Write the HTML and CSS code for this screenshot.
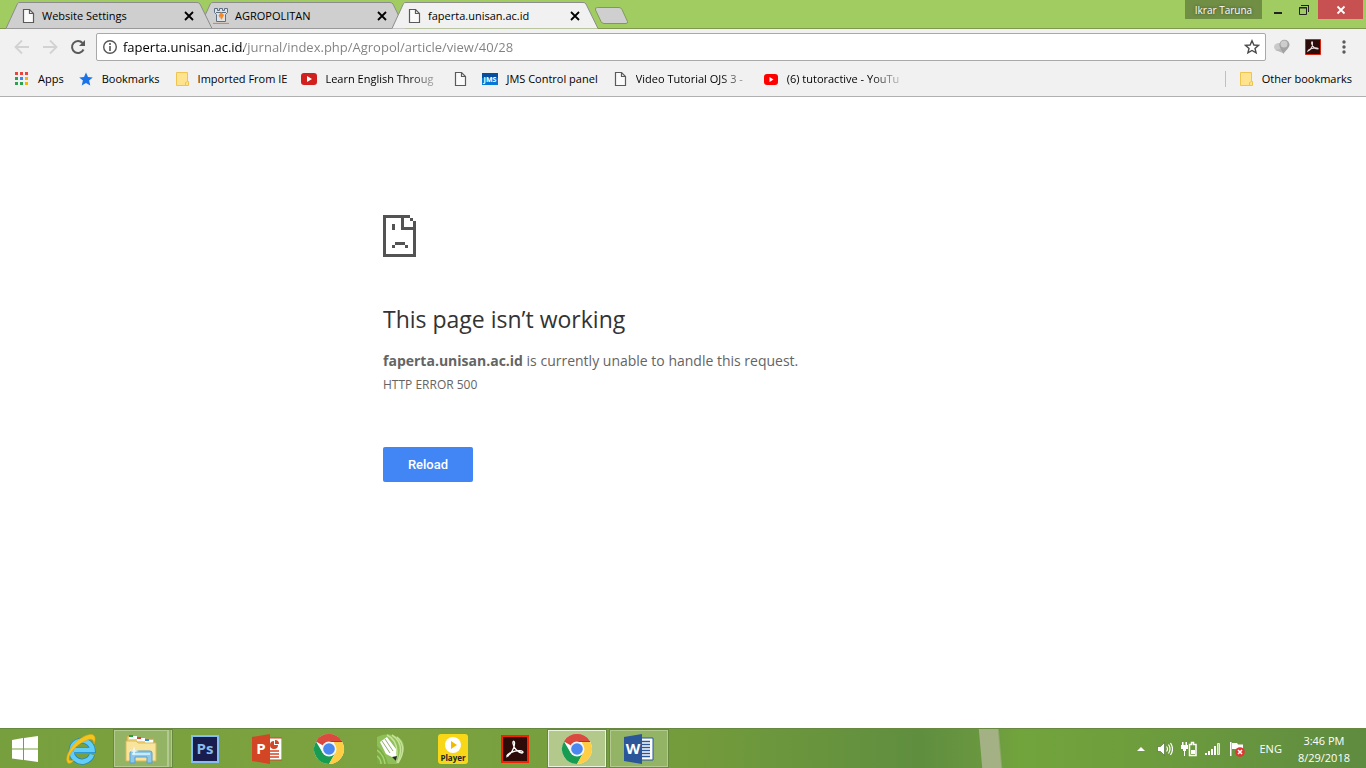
FILE: index.html
```
<!DOCTYPE html>
<html lang="en">
<head>
    <meta charset="UTF-8">
    <meta name="viewport" content="width=device-width, initial-scale=1.0">
    <title>faperta.unisan.ac.id</title>
    <link rel="stylesheet" href="styles.css">
</head>
<body>
    <!-- shared icons -->
    <svg class="sprite" aria-hidden="true">
        <symbol id="page" viewBox="0 0 16 16">
            <path d="M3.5 1.500h6l4 4v9h-10z" fill="#fafafa" stroke="#5a5a5a" stroke-width="1.2"/>
            <path d="M9.500 1.500v4h4" fill="none" stroke="#5a5a5a" stroke-width="1.2"/>
        </symbol>
        <symbol id="folder" viewBox="0 0 16 16">
            <path d="M2.500 1.500h11v9h1v4h-12z" fill="#ffe38f" stroke="#efc54f"/>
            <path d="M11.500 14.500v-3l2-1" fill="none" stroke="#efc54f"/>
        </symbol>
        <symbol id="cross" viewBox="0 0 16 16">
            <path d="M4 4l8 8M12 4l-8 8" fill="none" stroke="currentColor" stroke-width="1.8"/>
        </symbol>
        <symbol id="tabshape" viewBox="0 0 206 27">
            <path d="M0 26.500L11.500 1.500Q12 .5 14 .5H191Q193 .5 194 2L206 26.500" stroke="#8c8c8c"/>
        </symbol>
        <symbol id="chrome" viewBox="0 0 32 32">
            <circle cx="16" cy="16" r="15" fill="#fff"/>
            <path d="M16 16L3 8.500A15 15 0 0 1 29 8.500L16 9z" fill="#d8453b"/>
            <path d="M3 8.500A15 15 0 0 1 29 8.500H16z" fill="#db4a3f"/>
            <path d="M3 8.500A15 15 0 0 0 16 31L22.500 19.500L16 22.500L9.500 19.500z" fill="#179c52"/>
            <path d="M29 8.500A15 15 0 0 1 16 31L22.500 19.500L21 9z" fill="#ffce44"/>
            <path d="M16 8.500H29" stroke="#b5342c"/>
            <circle cx="16" cy="16" r="7.500" fill="#f4f4f4"/>
            <circle cx="16" cy="16" r="5.800" fill="#4a87ee"/>
        </symbol>
    </svg>

    <header class="browser">
        <div class="titlebar">
            <div class="tabs">
                <div class="tab first">
                    <svg class="shape"><use href="#tabshape"/></svg>
                    <svg class="icon"><use href="#page"/></svg>
                    <span class="tab-title">Website Settings</span>
                    <button type="button" class="close-tab" aria-label="Close tab"><svg class="icon"><use href="#cross"/></svg></button>
                </div>
                <div class="tab">
                    <svg class="shape"><use href="#tabshape"/></svg>
                    <svg class="icon" viewBox="0 0 16 16">
                        <path d="M1.500.5h3v2h2v-2h3v2h2v-2h3v4l-2 2v7h-9v-7l-2-2z" fill="#dfe2e6" stroke="#5d6f84"/>
                        <path d="M3 4.500h10" stroke="#5d6f84"/>
                        <path d="M8 4L5.500 7.500 7.500 11V8l1 4 2.500-5z" fill="#f28b25"/>
                        <path d="M0 15.500h16" stroke="#e8862b" stroke-width="1.200"/>
                    </svg>
                    <span class="tab-title">AGROPOLITAN</span>
                    <button type="button" class="close-tab" aria-label="Close tab"><svg class="icon"><use href="#cross"/></svg></button>
                </div>
                <div class="tab active">
                    <svg class="shape"><use href="#tabshape"/></svg>
                    <svg class="icon"><use href="#page"/></svg>
                    <span class="tab-title">faperta.unisan.ac.id</span>
                    <button type="button" class="close-tab" aria-label="Close tab"><svg class="icon"><use href="#cross"/></svg></button>
                </div>
                <button type="button" class="new-tab" aria-label="New tab">
                    <svg width="35" height="18" viewBox="0 0 35 18"><path d="M3.500.5H25q2 0 3 2l5.500 12q.5 2-1.500 2H10q-2 0-3-2L1.500 3q-1-2.500 2-2.500z" fill="#cfcfcf" stroke="#809a56"/></svg>
                </button>
            </div>
            <div class="window-controls">
                <button type="button" class="profile">Ikrar Taruna</button>
                <button type="button" class="control" aria-label="Minimize"><svg width="12" height="12"><path d="M2 9h8" stroke="#222" stroke-width="2"/></svg></button>
                <button type="button" class="control" aria-label="Restore"><svg width="12" height="12"><path d="M1.500 3.500h7v7h-7zM4 1.500h6.500V8" fill="none" stroke="#222"/><path d="M1 4h8M3 1.500h8" stroke="#222"/></svg></button>
                <button type="button" class="control close" aria-label="Close"><svg width="12" height="12"><path d="M2.500 2.500l7 7M9.500 2.500l-7 7" stroke="#fff" stroke-width="1.800"/></svg></button>
            </div>
        </div>

        <div class="toolbar">
            <button type="button" class="tool" aria-label="Back"><svg width="16" height="16"><path d="M15 8H2M8 1.500L1.500 8L8 14.500" fill="none" stroke="#d2d2d2" stroke-width="1.800"/></svg></button>
            <button type="button" class="tool" aria-label="Forward"><svg width="16" height="16"><path d="M1 8h13M8 1.500L14.500 8L8 14.500" fill="none" stroke="#d2d2d2" stroke-width="1.800"/></svg></button>
            <button type="button" class="tool" aria-label="Reload this page"><svg width="16" height="16"><path d="M13.500 10.500A6 6 0 1 1 12.500 4" fill="none" stroke="#5a5a5a" stroke-width="2"/><path d="M15 1v6H9z" fill="#5a5a5a"/></svg></button>
            <div class="omnibox">
                <svg class="icon" viewBox="0 0 16 16"><circle cx="8" cy="8" r="6.300" fill="none" stroke="#555" stroke-width="1.400"/><path d="M8 7v5M8 4v2" stroke="#555" stroke-width="1.600"/></svg>
                <input type="text" class="url" aria-label="Address" value="faperta.unisan.ac.id/jurnal/index.php/Agropol/article/view/40/28">
                <button type="button" class="plain" aria-label="Bookmark this page"><svg class="icon" viewBox="0 0 16 16"><path d="M8 1.800l1.900 4.200 4.600.4-3.500 3 1.100 4.500L8 11.500l-4.100 2.400L5 9.400l-3.500-3L6.100 6z" fill="none" stroke="#4a4a4a" stroke-width="1.400"/></svg></button>
            </div>
            <div class="extensions">
                <button type="button" class="tool" aria-label="Extension"><svg width="16" height="16"><ellipse cx="5" cy="8" rx="5" ry="4" fill="#c9c9c9"/><path d="M1 11l8 3 2-5z" fill="#b9b9b9"/><path d="M9.500 15C8 12 5.500 9 5.300 5.800a5 5 0 0 1 10.200 0C15.500 9 11 12 9.500 15z" fill="#a3a3a3"/><circle cx="10" cy="5" r="3.500" fill="#cdcdcd"/></svg></button>
                <button type="button" class="tool" aria-label="Adobe Acrobat"><svg width="16" height="16"><path d="M.5.500h15v15H.5z" fill="#2b0d0a" stroke="#d8230f"/><path d="M3 12C6 10.500 8 8 7.500 3.500 7 2 6 3.500 7 5.500c1 2.500 3.500 4.500 6 4.500.8-1-2-1.600-5-.8-2.500.5-4.500 1.500-5 2.800z" fill="none" stroke="#e9dcdc" stroke-width="1.100"/></svg></button>
                <button type="button" class="tool" aria-label="Menu"><svg width="16" height="16"><circle cx="8" cy="3" r="1.700" fill="#5a5a5a"/><circle cx="8" cy="8" r="1.700" fill="#5a5a5a"/><circle cx="8" cy="13" r="1.700" fill="#5a5a5a"/></svg></button>
            </div>
        </div>

        <nav class="bookmarks">
            <a href="#" class="bookmark"><svg class="icon" viewBox="0 0 16 16"><path d="M1 1h3v3H1zM6 1h3v3H6zM11 1h3v3h-3z" fill="#e8453c"/><path d="M1 6h3v3H1zM1 11h3v3H1z" fill="#2ba24c"/><path d="M6 6h3v3H6z" fill="#4286f5"/><path d="M11 6h3v3h-3zM11 11h3v3h-3z" fill="#f5b400"/><path d="M6 11h3v3H6z" fill="#2ba24c"/></svg><span>Apps</span></a>
            <a href="#" class="bookmark"><svg class="icon" viewBox="0 0 16 16"><path d="M8 1.500l2 4.500 4.800.4-3.700 3.200 1.200 4.800L8 12l-4.300 2.400 1.200-4.800L1.200 6.400 6 6z" fill="#1a73e8"/></svg><span>Bookmarks</span></a>
            <a href="#" class="bookmark"><svg class="icon"><use href="#folder"/></svg><span>Imported From IE</span></a>
            <a href="#" class="bookmark"><svg class="icon" viewBox="0 0 16 16"><rect y="2" width="16" height="12" rx="3" fill="#d0211f"/><path d="M6 5l5 3-5 3z" fill="#fff"/></svg><span class="fade">Learn English Throug</span></a>
            <a href="#" class="bookmark" aria-label="Untitled bookmark"><svg class="icon"><use href="#page"/></svg></a>
            <a href="#" class="bookmark"><svg class="icon" viewBox="0 0 16 16"><path d="M0 2h16v12H0z" fill="#0878d6"/><path d="M0 2h16v5H0z" fill="#064f9c"/><text x="8" y="11" class="jms">JMS</text></svg><span>JMS Control panel</span></a>
            <a href="#" class="bookmark"><svg class="icon"><use href="#page"/></svg><span class="fade">Video Tutorial OJS 3 -</span></a>
            <a href="#" class="bookmark"><svg class="icon" viewBox="0 0 16 16"><rect x="1" y="3" width="14" height="11" rx="3" fill="#f00"/><path d="M6.500 6l4 2.500-4 2.500z" fill="#fff"/></svg><span class="fade">(6) tutoractive - YouTu</span></a>
            <a href="#" class="bookmark other"><svg class="icon"><use href="#folder"/></svg><span>Other bookmarks</span></a>
        </nav>
    </header>

    <main class="content">
        <div class="error">
            <svg class="sad" width="33" height="42" shape-rendering="crispEdges">
                <path d="M0 0h27v3H3v36h27V15H18V3h3v9h9V6h3v36H0zM27 3h3v3h-3z" fill="#535353"/>
                <path d="M9 9h3v6H9zM12 27h10v3H12zM9 30h3v3H9zM22 30h3v3h-3z" fill="#535353"/>
            </svg>
            <h1>This page isn’t working</h1>
            <p><strong>faperta.unisan.ac.id</strong> is currently unable to handle this request.</p>
            <div class="error-code">HTTP ERROR 500</div>
            <button type="button" class="reload">Reload</button>
        </div>
    </main>

    <footer class="taskbar">
        <button type="button" class="start" aria-label="Start"><svg width="26" height="26"><path d="M0 4l11-2v10.500H0zM12 2l14-2v12.500H12zM0 13.500h11V24L0 22.500zM12 13.500h14V26l-14-2z" fill="#fff"/></svg></button>
        <button type="button" class="app" aria-label="Internet Explorer">
            <svg width="32" height="32">
                <path d="M27 21.500A10.500 10.500 0 1 1 27.500 17H9" fill="none" stroke="#1f86c4" stroke-width="6"/>
                <path d="M27 21.500A10.500 10.500 0 1 1 27.500 17H9" fill="none" stroke="#62cdf6" stroke-width="4.500"/>
                <path d="M3 30C-2 25 8 8 20 3c9-4 12 0 9 8 0-5-3-6-9-3C11 12 3 21 4 27c1 1 3 1 5 0-2 3-5 4-6 3z" fill="#f6c51d" stroke="#dba514" stroke-width=".6"/>
            </svg>
        </button>
        <button type="button" class="app running stacked" aria-label="File Explorer">
            <svg width="32" height="32"><path d="M2 3h9l2 3h16v21H2z" fill="#f0d279" stroke="#c9a54a"/><path d="M4 3h8v3H4zM12 5h8v3h-8zM20 7h8v3h-8z" fill="#fff"/><path d="M4 2h4v2H4z" fill="#1ba33d"/><path d="M12 4h4v2h-4z" fill="#dc4331"/><path d="M20 6h4v2h-4z" fill="#268fe0"/><path d="M1 8h10l2 2h18v18H1z" fill="#f9e49c" stroke="#dbb95d"/><path d="M5 30V20q0-2 2-2h18q2 0 2 2v10h-5v-6H10v6z" fill="#8cc8ea" stroke="#5a9dc8"/><path d="M7 20h18v2H7z" fill="#c9eafa"/><path d="M9 13l1 4 4 1-4 1-1 4-1-4-4-1 4-1z" fill="#fff" opacity=".8"/></svg>
        </button>
        <button type="button" class="app" aria-label="Photoshop">
            <svg width="28" height="28"><path d="M1 1h26v26H1z" fill="#181d4d" stroke="#86bdf0" stroke-width="2"/><text x="14" y="19" class="ps">Ps</text></svg>
        </button>
        <button type="button" class="app" aria-label="PowerPoint">
            <svg width="30" height="30"><path d="M14 4h16v22H14z" fill="#fff" stroke="#d24625"/><path d="M18 20h9M18 23h9M18 17h9" stroke="#d24625" stroke-width="1.500"/><path d="M22 7a4 4 0 1 0 4 4h-4z" fill="#d24625"/><path d="M23 6a4 4 0 0 1 4 4h-4z" fill="#d24625"/><path d="M0 3l18-3v30L0 27z" fill="#d24625"/><text x="9" y="20" class="office">P</text></svg>
        </button>
        <button type="button" class="app" aria-label="Google Chrome"><svg width="32" height="32"><use href="#chrome"/></svg></button>
        <button type="button" class="app" aria-label="CorelDRAW">
            <svg width="28" height="30">
                <path d="M0 3q8-4 15-2 13 3 12 14-1 9-7 15H0z" fill="#8fbf58"/>
                <path d="M15 1q14 9 5 28M20 3q11 10 1 26M10 1q13 6 9 26" fill="none" stroke="#c7e39a" stroke-width="1.500"/>
                <path d="M0 12q8 7 11 18H0z" fill="#79ac42"/>
                <path d="M0 16q7 5 8 14M0 22q4 3 4 8" fill="none" stroke="#a9d273" stroke-width="1.500"/>
                <path d="M3 8l7-5 9 12 0 10-10-5z" fill="#fff"/>
                <path d="M5 7l8 12M8 5l8 12" stroke="#8fae6e"/>
                <path d="M15 23l4 4 1-5z" fill="#20321a"/>
            </svg>
        </button>
        <button type="button" class="app" aria-label="Player">
            <svg width="30" height="30"><rect width="30" height="30" rx="3" fill="#f8d618"/><circle cx="15" cy="11" r="8" fill="#fff"/><path d="M13 7l6 4-6 4z" fill="#eebd00"/><text x="15" y="27" class="player">Player</text></svg>
        </button>
        <button type="button" class="app" aria-label="Acrobat Reader">
            <svg width="28" height="28"><path d="M1 1h26v26H1z" fill="#2d0b08" stroke="#f22206" stroke-width="2"/><path d="M6 21.500C10 19 14 13 13.500 7.500 13 5.500 11.500 6 12 8.500c.5 4.500 5 9 9 9.500 2-.5 1-2.500-3-2.300-5 .3-11 2.300-12 4.800 0 1 0 1 0 1z" fill="none" stroke="#fff" stroke-width="1.300"/></svg>
        </button>
        <button type="button" class="app running current" aria-label="Google Chrome window"><svg width="32" height="32"><use href="#chrome"/></svg></button>
        <button type="button" class="app running" aria-label="Word">
            <svg width="30" height="30"><path d="M14 4h15v22H14z" fill="#fff" stroke="#2b579a"/><path d="M17 7.500h9M17 10.500h9M17 13.500h9M17 16.500h9M17 19.500h9M17 22.500h9" stroke="#2b579a" stroke-width="1.500"/><path d="M0 3l18-3v30L0 27z" fill="#2b579a"/><text x="9" y="20" class="office">W</text></svg>
        </button>

        <div class="tray">
            <button type="button" class="plain" aria-label="Show hidden icons"><svg class="icon" viewBox="0 0 16 16"><path d="M4 10l4-4 4 4z" fill="#fff"/></svg></button>
            <button type="button" class="plain" aria-label="Volume"><svg class="icon" viewBox="0 0 16 16"><path d="M.5 5.500h3l4-4v13l-4-4h-3z" fill="#fff" stroke="#42602b" stroke-width=".6"/><path d="M9.500 5.500q2 2.500 0 5M11.500 3.500q3 4.500 0 9M13.500 2q4 6 0 12" fill="none" stroke="#fff" stroke-width="1.200"/></svg></button>
            <button type="button" class="plain" aria-label="Battery"><svg class="icon" viewBox="0 0 16 16"><path d="M9 3.500h1.500v-2h2v2H15v11H8.500v-11z" fill="none" stroke="#fff" stroke-width="1.500"/><path d="M10 9h4v4h-4z" fill="#fff"/><path d="M0 4h7v4H5v2H4v5H3v-5H2V8H0zM1 1h1.500v3H1zM4.500 1H6v3H4.500z" fill="#fff"/></svg></button>
            <button type="button" class="plain" aria-label="Network"><svg class="icon" viewBox="0 0 16 16"><path d="M0 12h2v2H0zM3 10h2v4H3zM6 8h2v6H6zM9 5h2v9H9z" fill="#fff"/><path d="M12.500 2.500h2v11h-2z" fill="#b7c9a4" stroke="#e4ecd9"/></svg></button>
            <button type="button" class="plain" aria-label="Action Center"><svg class="icon" viewBox="0 0 16 16"><path d="M1 1h1.500v14H1z" fill="#fff"/><path d="M3 2h5l1 1.500h5V9H8L7 8H3z" fill="#fff"/><circle cx="11" cy="11" r="4.800" fill="#dd3832"/><path d="M9 9l4 4M13 9l-4 4" stroke="#fff" stroke-width="1.500"/></svg></button>
            <button type="button" class="plain lang">ENG</button>
            <button type="button" class="plain clock">3:46 PM<br>8/29/2018</button>
        </div>
    </footer>
</body>
</html>
```
FILE: styles.css
```
* {
    box-sizing: border-box;
}
body {
    display: flex;
    flex-direction: column;
    min-height: 100vh;
    margin: 0;
    background: #fff;
    color: #000;
    font-family: 'Segoe UI', 'Open Sans', sans-serif;
    font-size: 11px;
}
button {
    padding: 0;
    border: none;
    background: none;
    color: inherit;
    font: inherit;
    cursor: pointer;
}
svg {
    display: block;
    flex: none;
}
.sprite {
    position: absolute;
    width: 0;
    height: 0;
}
.icon {
    width: 16px;
    height: 16px;
}

/* title bar and tabs */
.browser {
    background: #f1f1f1;
    border-bottom: 1px solid #b0b0b0;
}
.titlebar {
    display: flex;
    justify-content: space-between;
    height: 29px;
    background: #a1cc61;
    border-bottom: 1px solid #80964f;
}
.tabs {
    display: flex;
    align-items: flex-end;
    padding-left: 6px;
}
.tab {
    position: relative;
    display: flex;
    align-items: center;
    gap: 6px;
    width: 206px;
    height: 27px;
    margin-right: -13px;
    margin-bottom: -1px;
    padding: 0 15px 0 14px;
    fill: #cfcfcf;
}
.tab.first {
    z-index: 1;
}
.tab.active {
    z-index: 2;
    fill: #f1f1f1;
}
.tab .icon {
    position: relative;
}
.shape {
    position: absolute;
    left: 0;
    top: 0;
    width: 206px;
    height: 27px;
}
.tab:not(.active)::after {
    content: '';
    position: absolute;
    left: 0;
    right: 0;
    bottom: 0;
    height: 1px;
    background: #999;
}
.tab-title {
    position: relative;
    flex: 1;
}
.new-tab {
    margin: 0 0 3px 9px;
}
.window-controls {
    display: flex;
    align-items: flex-start;
}
.profile {
    width: 77px;
    height: 19px;
    margin-right: 3px;
    background: #708f44;
    color: #fff;
    font-size: 10px;
    text-shadow: 0 0 3px #333;
}
.control {
    display: flex;
    align-items: center;
    justify-content: center;
    width: 26px;
    height: 19px;
}
.control.close {
    width: 45px;
    margin: 0 3px 0 1px;
    background: #c75050;
}

/* toolbar */
.toolbar {
    display: flex;
    align-items: center;
    gap: 12px;
    padding: 4px 14px 0;
}
.tool {
    width: 16px;
    height: 16px;
}
.omnibox {
    flex: 1;
    display: flex;
    align-items: center;
    gap: 5px;
    height: 28px;
    margin: 0 -4px 0 -2px;
    padding: 0 5px;
    background: #fff;
    border: 1px solid #a9a9a9;
    border-radius: 2px;
}
.extensions {
    display: flex;
    gap: 15px;
}
.url {
    flex: 1;
    min-width: 0;
    padding: 0;
    border: none;
    outline: none;
    /* host name is black, the path is grey */
    background: linear-gradient(90deg, #000 121px, #808080 121px);
    -webkit-background-clip: text;
    background-clip: text;
    color: transparent;
    font: inherit;
    font-size: 13px;
}

/* bookmarks */
.bookmarks {
    display: flex;
    align-items: center;
    gap: 14px;
    height: 35px;
    padding: 0 14px;
}
.bookmark {
    display: flex;
    align-items: center;
    gap: 8px;
    color: #000;
    text-decoration: none;
    white-space: nowrap;
}
.fade {
    min-width: 113px;
    -webkit-mask-image: linear-gradient(90deg, #000 84px, transparent 120px);
    mask-image: linear-gradient(90deg, #000 84px, transparent 120px);
}
.other {
    margin-left: auto;
    padding-left: 12px;
    border-left: 1px solid #c0c0c0;
}
.jms {
    fill: #fff;
    font-size: 7px;
    font-weight: bold;
    text-anchor: middle;
}

/* error page */
.content {
    flex: 1;
}
.error {
    max-width: 600px;
    margin: 0 auto;
    padding-top: 118px;
    color: #646464;
    font-size: 14px;
}
.error h1 {
    margin: 46px 0 15px;
    color: #333;
    font-size: 23px;
    font-weight: normal;
    line-height: 32px;
}
.error p {
    margin: 0;
    line-height: 22px;
}
.error-code {
    margin-top: 3px;
    font-size: 12px;
    line-height: 20px;
}
.reload {
    min-width: 90px;
    height: 35px;
    margin-top: 52px;
    padding: 0 24px;
    border-radius: 2px;
    background: #4285f4;
    color: #fff;
    font-family: Roboto, sans-serif;
    font-size: 13px;
    font-weight: 500;
}

/* taskbar */
.taskbar {
    display: flex;
    align-items: center;
    height: 40px;
    padding-right: 16px;
    border-top: 1px solid #66883f;
    background:
        linear-gradient(85deg, transparent 978px, #a3b184 979px, #a3b184 997px, transparent 999px),
        linear-gradient(90deg, #789f3d 0, #7ca33f 400px, #739b3c 700px, #5f8e3f 920px, #6a9840 985px, #72a43c 1020px, #6d9c3d 1150px, #5f8b40 1366px);
}
.start {
    display: flex;
    justify-content: center;
    width: 50px;
}
.app {
    display: flex;
    align-items: center;
    justify-content: center;
    width: 60px;
    height: 39px;
    margin: 0 1px;
    border: 1px solid transparent;
}
.running {
    border: 2px solid #b3c98f;
    background: #93b365;
    outline: 1px solid #66883f;
    outline-offset: -1px;
}
.stacked {
    border-right: 6px double #b3c98f;
}
.current {
    border-color: #eaf1dc;
    background: #b3c98c;
}
.office,
.ps,
.player {
    fill: #fff;
    font-size: 15px;
    font-weight: bold;
    text-anchor: middle;
}
.ps {
    fill: #86bdf0;
}
.player {
    fill: #222;
    font-size: 8px;
}
.tray {
    display: flex;
    align-items: center;
    gap: 8px;
    margin-left: auto;
    color: #fff;
}
.lang {
    margin: 0 8px 0 6px;
}
.clock {
    line-height: 17px;
}
```
